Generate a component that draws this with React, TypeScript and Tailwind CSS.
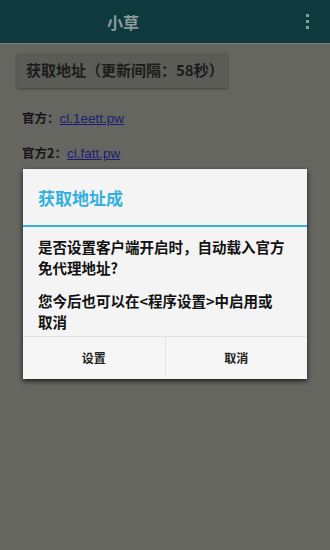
import React from "react";

const font = {
  fontFamily: '"Noto Sans CJK SC", "Noto Sans", "Liberation Sans", sans-serif',
};

function OverflowDots() {
  return (
    <div className="flex flex-col items-center gap-[3px]">
      <span className="block h-[3px] w-[3px] bg-[#8e9896]" />
      <span className="block h-[3px] w-[3px] bg-[#8e9896]" />
      <span className="block h-[3px] w-[3px] bg-[#8e9896]" />
    </div>
  );
}

function ResultDialog() {
  return (
    <div className="absolute left-[23px] top-[169px] w-[284px] bg-[#f4f4f4] shadow-[0_2px_5px_rgba(0,0,0,0.75)]">
      {/* Title */}
      <div className="flex h-[56px] items-center px-[15px]">
        <span className="text-[17px] font-bold leading-none text-[#33b0e0]">获取地址成</span>
      </div>
      <div className="h-[2px] bg-[#33b0e0]" />

      {/* Message */}
      <div className="px-[15px] pt-[9px] pb-[4px] text-[14.5px] font-bold leading-[21px] text-[#111]">
        <p>是否设置客户端开启时，自动载入官方免代理地址?</p>
        <p className="mt-[12px]">
          您今后也可以在&lt;程序设置&gt;中启用或
          <br />
          取消
        </p>
      </div>

      {/* Buttons */}
      <div className="flex h-[43px] border-t border-[#e2e2e2] bg-[#f6f6f6]">
        <button className="flex flex-1 items-center justify-center border-r border-[#e2e2e2] text-[12px] font-bold text-[#222]">
          设置
        </button>
        <button className="flex flex-1 items-center justify-center text-[12px] font-bold text-[#222]">
          取消
        </button>
      </div>
    </div>
  );
}

export default function App() {
  return (
    <div className="relative h-[550px] w-[330px] overflow-hidden bg-[#656660]" style={font}>
      {/* Action bar */}
      <div className="flex h-[44px] items-center justify-between border-b border-[#7a7b75] bg-[#0e393d] pl-[107px] pr-[21px]">
        <span className="text-[16px] font-bold text-[#8d9c9a]">小草</span>
        <OverflowDots />
      </div>

      {/* Page content (dimmed) */}
      <div className="px-[17px] pt-[9px]">
        <button className="flex h-[35px] w-[211px] items-center bg-[#5b5c57] pl-[9px] text-[15px] font-bold text-[#1b1b1b] shadow-[0_1px_2px_rgba(0,0,0,0.35)]">
          获取地址（更新间隔：58秒）
        </button>

        <div className="mt-[21px] pl-[5px] text-[12.5px] leading-[18px] text-[#151515]">
          <p>
            <span className="font-bold">官方：</span>
            <span className="font-['Liberation_Sans',sans-serif] text-[13.5px] text-[#1c1c78] underline">cl.1eett.pw</span>
          </p>
          <p className="mt-[16px]">
            <span className="font-bold">官方2：</span>
            <span className="font-['Liberation_Sans',sans-serif] text-[13.5px] text-[#1c1c78] underline">cl.fatt.pw</span>
          </p>
        </div>
      </div>

      <ResultDialog />
    </div>
  );
}
